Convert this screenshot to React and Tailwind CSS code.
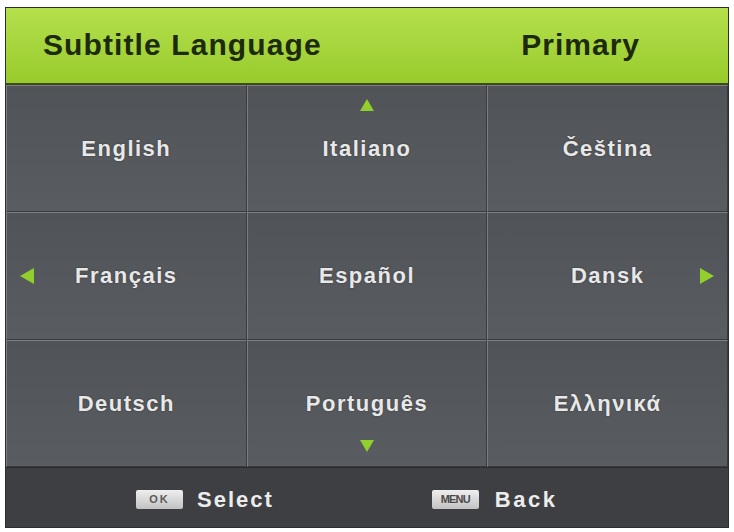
const rows = [
  ["English", "Italiano", "Čeština"],
  ["Français", "Español", "Dansk"],
  ["Deutsch", "Português", "Ελληνικά"],
];

function Tri({ dir, className }) {
  const pts = {
    up: "7,0 14,12 0,12",
    down: "0,0 14,0 7,12",
    left: "14,0 14,16 0,8",
    right: "0,0 14,8 0,16",
  }[dir];
  const vb = dir === "up" || dir === "down" ? "0 0 14 12" : "0 0 14 16";
  return (
    <svg viewBox={vb} className={className}>
      <polygon points={pts} fill="#92cf2c" />
    </svg>
  );
}

function Key({ children, small }) {
  return (
    <div className="w-[47px] h-[19px] rounded-[2px] bg-gradient-to-b from-[#efefef] to-[#c2c2c2] flex items-center justify-center">
      <span className={small ? "text-[11px] font-bold text-[#4a4a4a] tracking-[-0.8px]" : "text-[11px] font-bold text-[#5a5a5a] tracking-[2px]"}>
        {children}
      </span>
    </div>
  );
}

export default function App() {
  return (
    <div className="w-[734px] h-[532px] bg-white pt-[7px] px-[5px] pb-[4px]" style={{ fontFamily: '"Liberation Sans", Arial, sans-serif' }}>
      <div className="h-full flex flex-col border border-[#2c2d2f] bg-[#55585c]">
        <div className="h-[77px] shrink-0 bg-gradient-to-b from-[#b4e04c] to-[#98cb2b] border-b-2 border-[#3d4a1e] flex items-center justify-between pl-[37px] pr-[88px] pb-[2px]">
          <span className="text-[30px] font-bold text-[#1d2a0e] tracking-[1.1px]">Subtitle Language</span>
          <span className="text-[30px] font-bold text-[#1d2a0e] tracking-[1px]">Primary</span>
        </div>

        <div className="flex-1 grid grid-cols-3 grid-rows-3">
          {rows.map((row, r) =>
            row.map((name, c) => (
              <div
                key={name}
                className="relative flex items-center justify-center border-t border-l border-[#7b7e83] border-r border-b border-r-[#393b3e] border-b-[#393b3e] bg-gradient-to-b from-[#505357] to-[#595c60]"
              >
                <span className="text-[22px] font-bold text-[#e8e8e8] tracking-[1.5px] [text-shadow:0_0_2px_rgba(0,0,0,0.4)]">
                  {name}
                </span>
                {r === 0 && c === 1 && <Tri dir="up" className="absolute top-[13px] left-1/2 -translate-x-1/2 w-[14px] h-[12px]" />}
                {r === 2 && c === 1 && <Tri dir="down" className="absolute bottom-[14px] left-1/2 -translate-x-1/2 w-[14px] h-[12px]" />}
                {r === 1 && c === 0 && <Tri dir="left" className="absolute left-[13px] top-1/2 -translate-y-1/2 w-[14px] h-[16px]" />}
                {r === 1 && c === 2 && <Tri dir="right" className="absolute right-[13px] top-1/2 -translate-y-1/2 w-[14px] h-[16px]" />}
              </div>
            ))
          )}
        </div>

        <div className="h-[60px] shrink-0 bg-[#3d3f42] border-t border-[#2a2b2d] flex items-center pl-[130px] pt-[4px]">
          <Key>OK</Key>
          <span className="ml-[14px] text-[22px] font-bold text-[#ececec] tracking-[2px]">Select</span>
          <div className="ml-[158px]">
            <Key small>MENU</Key>
          </div>
          <span className="ml-[16px] text-[22px] font-bold text-[#ececec] tracking-[2.5px]">Back</span>
        </div>
      </div>
    </div>
  );
}
